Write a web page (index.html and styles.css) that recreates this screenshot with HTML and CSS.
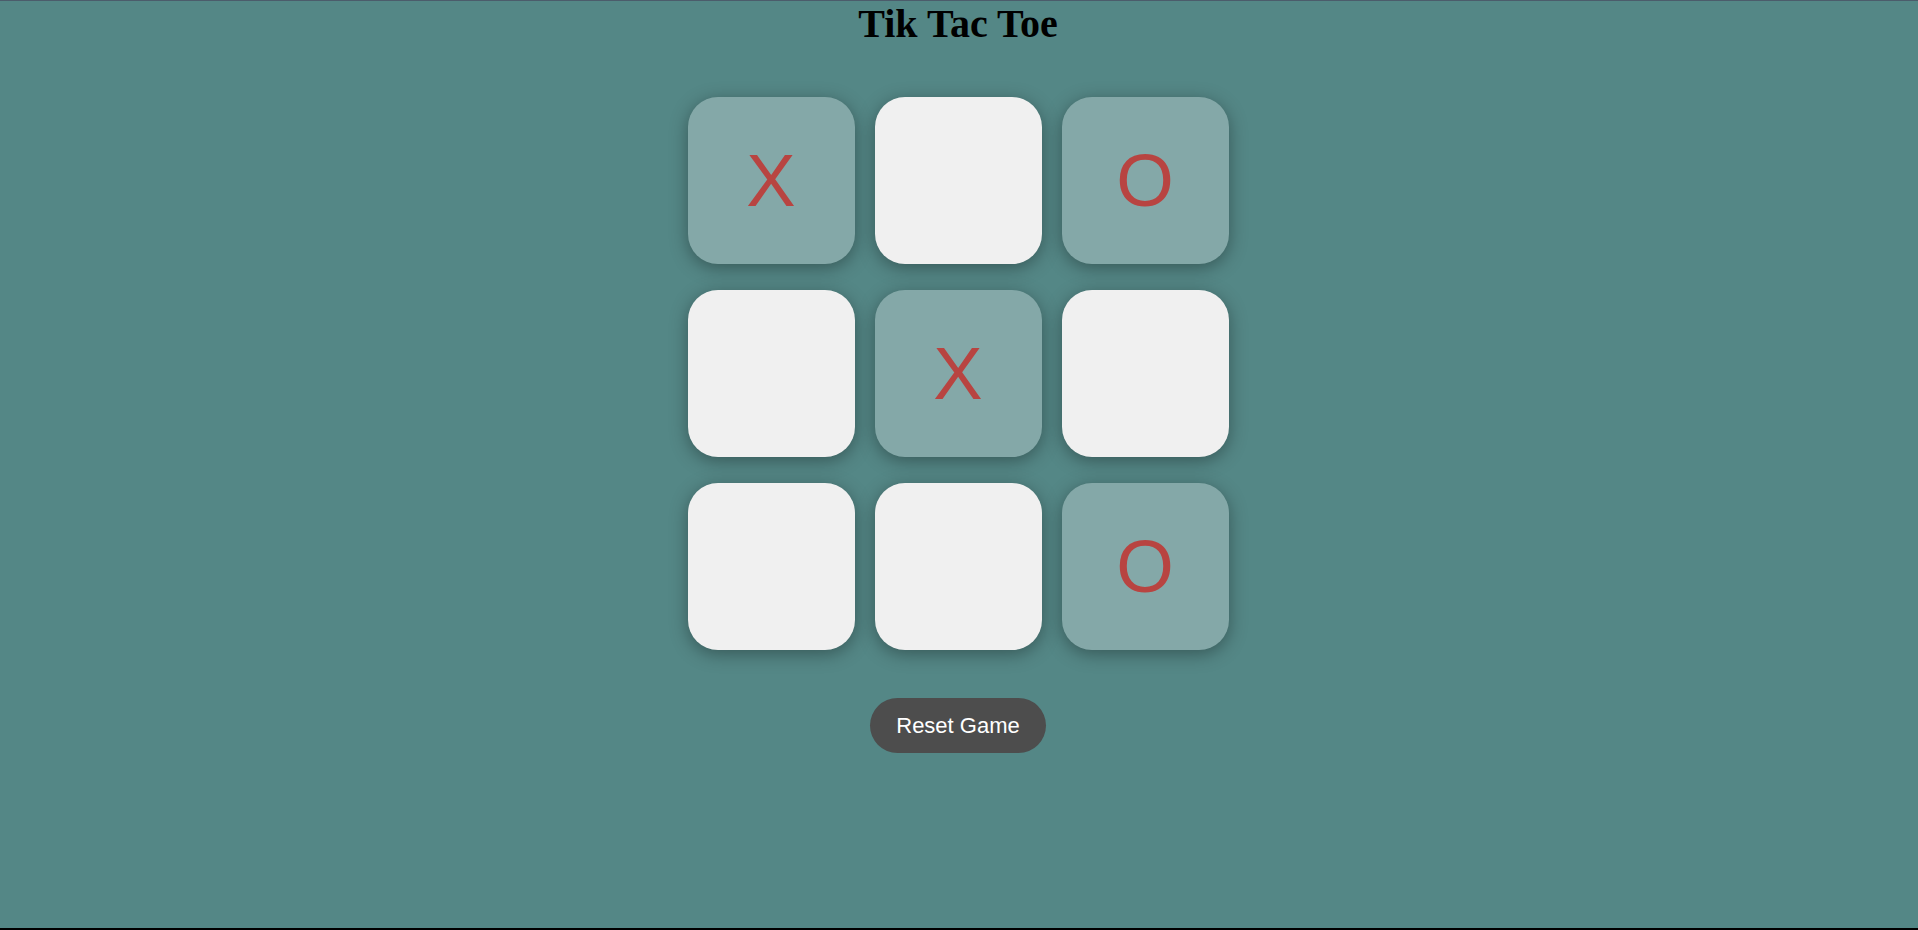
FILE: index.html
```html
<!DOCTYPE html>
<html lang="en">
<head>
<meta charset="utf-8">
<title>Tik Tac Toe</title>
<link rel="stylesheet" href="styles.css">
</head>
<body>
<main class="page">
  <h1 class="title">Tik Tac Toe</h1>
  <div class="board">
    <div class="cell cell--filled">X</div>
    <div class="cell"></div>
    <div class="cell cell--filled">O</div>
    <div class="cell"></div>
    <div class="cell cell--filled">X</div>
    <div class="cell"></div>
    <div class="cell"></div>
    <div class="cell"></div>
    <div class="cell cell--filled">O</div>
  </div>
  <button class="reset">Reset Game</button>
</main>
</body>
</html>
```

FILE: styles.css
```css
* { box-sizing: border-box; }
html, body { margin: 0; padding: 0; }
body {
  background: #548786;
  min-height: 100vh;
  border-top: 1px solid #4b5c6b;
  border-bottom: 2px solid #000;
}
.page {
  display: flex;
  flex-direction: column;
  align-items: center;
  padding-right: 2px;
}
.title {
  margin: 0;
  font-family: "Liberation Serif", "Times New Roman", serif;
  font-weight: bold;
  font-size: 40px;
  line-height: 46px;
  color: #000;
}
.board {
  margin-top: 50px;
  display: grid;
  grid-template-columns: repeat(3, 167px);
  grid-auto-rows: 167px;
  column-gap: 20px;
  row-gap: 26px;
}
.cell {
  background: #f0f0f0;
  border-radius: 30px;
  box-shadow: 0 4px 18px rgba(0, 0, 0, 0.35);
  display: flex;
  align-items: center;
  justify-content: center;
  font-family: "Liberation Sans", Arial, sans-serif;
  font-size: 74px;
  color: #b84441;
}
.cell--filled {
  background: #84a8a8;
}
.reset {
  margin-top: 48px;
  background: #4d4d4d;
  color: #fff;
  border: none;
  border-radius: 28px;
  padding: 15px 26px;
  font-family: "Liberation Sans", Arial, sans-serif;
  font-size: 22px;
  line-height: 25px;
  cursor: pointer;
}
```
